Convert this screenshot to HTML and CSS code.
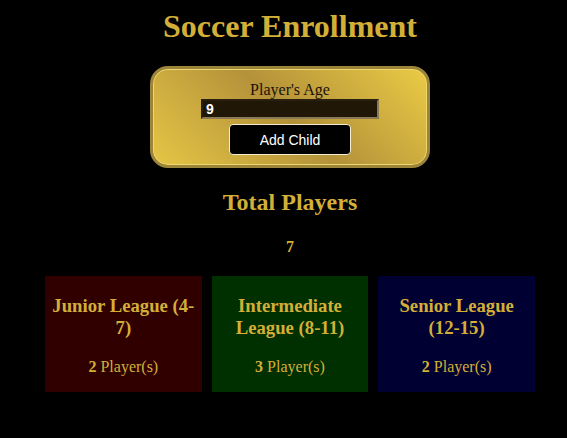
FILE: index.html
```html
<!DOCTYPE html>
<html lang="en">
<head>
  <meta charset="UTF-8" />
  <title>Soccer Enrollment</title>
  <link rel="stylesheet" href="styles.css">
</head>
<body>
  <div class="app">
    <h1>Soccer Enrollment</h1>

    <!-- Enrollment form -->
    <div class="enroll">
      <label for="age">Player's Age</label>
      <input type="number" id="age" value="9">
      <button class="addBtn">Add Child</button>
    </div>

    <h2>Total Players</h2>
    <div class="total">7</div>

    <!-- Leagues -->
    <div class="leagues">
      <div class="league junior">
        <h3>Junior League (4-7)</h3>
        <p><strong>2</strong> Player(s)</p>
      </div>
      <div class="league intermediate">
        <h3>Intermediate League (8-11)</h3>
        <p><strong>3</strong> Player(s)</p>
      </div>
      <div class="league senior">
        <h3>Senior League (12-15)</h3>
        <p><strong>2</strong> Player(s)</p>
      </div>
    </div>
  </div>
</body>
</html>
```

FILE: styles.css
```css
* {
  box-sizing: border-box;
}

body {
  margin: 8px;
  background: #000;
  color: #d4af37;
  font-family: 'Liberation Serif', 'Times New Roman', serif;
  text-align: center;
}

.app {
  margin-left: 13px;
}

h1 {
  font-size: 32px;
  margin: 0 0 21px;
  line-height: 37px;
}

.enroll {
  width: 280px;
  margin: 0 auto;
  padding: 12px 0 10px;
  border: 3px solid #9c8538;
  border-radius: 18px;
  background: linear-gradient(45deg, #e6c645 0%, #b4923a 50%, #ebcb45 100%);
  box-shadow: inset 0 0 0 1px #ecd771;
  display: flex;
  flex-direction: column;
  align-items: center;
}

.enroll label {
  color: #1a1206;
  font-size: 16px;
  line-height: 18px;
}

.enroll input {
  width: 178px;
  height: 20px;
  margin-top: 0;
  padding: 0 3px;
  background: #201707;
  color: #fff;
  border: 2px solid #8a7a55;
  border-top-color: #2a2010;
  border-left-color: #2a2010;
  font-family: 'Liberation Sans', Arial, sans-serif;
  font-size: 14px;
  font-weight: bold;
}

.enroll input::-webkit-inner-spin-button {
  display: none;
}

.addBtn {
  width: 122px;
  height: 31px;
  margin-top: 5px;
  background: #000;
  color: #fff;
  border: 1px solid #f2ecd0;
  border-radius: 4px;
  font-family: 'Liberation Sans', Arial, sans-serif;
  font-size: 14px;
  cursor: pointer;
}

h2 {
  font-size: 24px;
  line-height: 28px;
  margin: 20px 0 22px;
}

.total {
  font-weight: bold;
  font-size: 16px;
  line-height: 18px;
}

.leagues {
  display: grid;
  grid-template-columns: repeat(3, 1fr);
  gap: 10px;
  margin: 20px 24px 0;
}

.league {
  padding: 19px 6px 16px;
}

.league h3 {
  font-size: 18.72px;
  line-height: 22px;
  margin: 0 0 19px;
}

.league p {
  margin: 0;
  font-size: 16px;
  line-height: 18px;
}

.junior {
  background: #300000;
}

.intermediate {
  background: #003000;
}

.senior {
  background: #000033;
}
```
